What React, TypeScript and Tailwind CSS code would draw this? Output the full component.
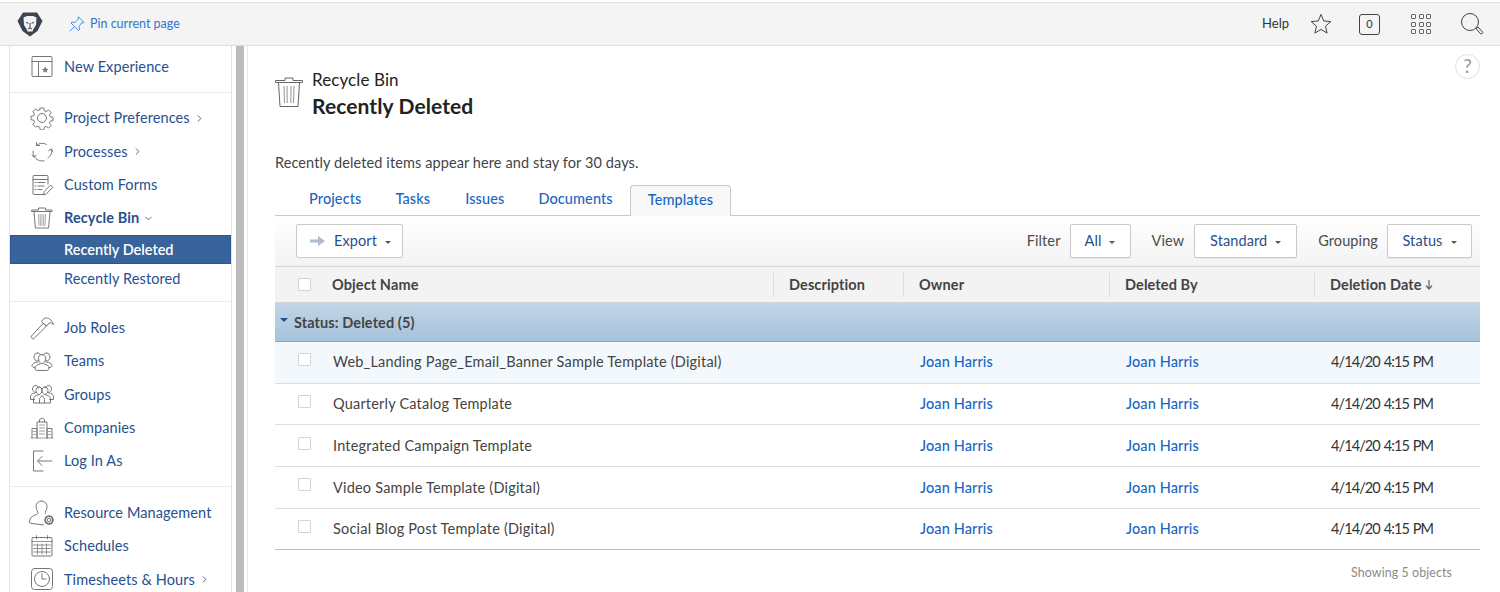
import type { ReactNode } from 'react'
import { ChevronDown, ChevronRight } from 'lucide-react'

const rows = [
  'Web_Landing Page_Email_Banner Sample Template (Digital)',
  'Quarterly Catalog Template',
  'Integrated Campaign Template',
  'Video Sample Template (Digital)',
  'Social Blog Post Template (Digital)',
]

function Icon({ children, size = 24 }: { children: ReactNode; size?: number }) {
  return (
    <svg width={size} height={size} viewBox="0 0 24 24" fill="none" stroke="#767676" strokeWidth="1" strokeLinecap="round" strokeLinejoin="round">
      {children}
    </svg>
  )
}

const icons: Record<string, ReactNode> = {
  experience: (
    <>
      <rect x="2" y="1.500" width="20" height="20" rx="1" />
      <path d="M2 6.500h20M8.500 6.500v15" />
      <path d="M15.200 11.500l1 2.200 2.300.2-1.800 1.500.6 2.300-2.100-1.200-2.100 1.200.6-2.300-1.800-1.500 2.300-.2z" fill="#767676" stroke="none" />
    </>
  ),
  gear: (
    <>
      <path d="M10.200 2h3.600l.5 2.800 1.900.8 2.400-1.600 2.500 2.500-1.600 2.400.8 1.900 2.700.5v3.400l-2.700.5-.8 1.900 1.600 2.400-2.500 2.500-2.400-1.600-1.900.8-.5 2.700h-3.600l-.5-2.700-1.900-.8L5.400 21 2.900 18.500l1.600-2.400-.8-1.900L1 13.700v-3.400l2.700-.5.8-1.900L2.900 5.500 5.400 3l2.400 1.600 1.900-.8z" />
      <circle cx="12" cy="12" r="4.500" />
    </>
  ),
  processes: (
    <>
      <path d="M6.500 6.500C9 4 13.500 3.500 16.500 5.500M6.500 3.500v3h3.200" />
      <path d="M21.500 10c.8 3.500-.5 7-3.500 9M22.800 12.800l-1.500-2.800-2.700 1.600" />
      <path d="M14 21.800c-4 .8-8-.8-10-4.800-1-2-1-3.500-.8-5M2 16l1.800 2 2.200-1.400" />
    </>
  ),
  forms: (
    <>
      <path d="M18 11V3.500a1 1 0 0 0-1-1H4a1 1 0 0 0-1 1v17a1 1 0 0 0 1 1h9" />
      <path d="M3 6.500h15M5 9.500h1M8 9.500h7M5 13h1M8 13h6M5 16.500h1M8 16.500h4" />
      <path d="M13.500 21.500l.7-3L20.500 12l2.300 2.300-6.300 6.500z" />
    </>
  ),
  trash: (
    <>
      <path d="M2 5.500h20V4H15.500V2h-7v2H2z" />
      <path d="M4 5.500l1.400 16.500h13.200L20 5.500" />
      <path d="M8.500 8.500l.4 11M12 8.500v11M15.500 8.500l-.4 11M10.200 8.500l.2 11M13.800 8.500l-.2 11" strokeWidth="0.6" />
    </>
  ),
  hammer: (
    <>
      <path d="M1 20.500L13.500 7l3 3L3.500 23z" />
      <path d="M11.500 5L15 2c3 -.5 7 1.500 8.500 6.500-1.500-1.500-3-2-4.500-1.500l-2.500 3z" />
    </>
  ),
  teams: (
    <>
      <path d="M7.500 13c-3 .5-5.500 1.500-5.500 3.500 0 1.500 1 2 3 2M7.500 4c-2 0-3.500 1.500-3.500 4 0 2 1.500 4 3.500 4 .7 0 1.300-.3 1.800-.7M7.500 4c1.500 0 2.500.7 3 1.800" />
      <path d="M16.500 13c3 .5 5.500 1.500 5.500 3.500 0 1.500-1 2-3 2M16.500 4c2 0 3.500 1.500 3.500 4 0 2-1.500 4-3.500 4-.7 0-1.300-.3-1.800-.7M16.500 4c-1.500 0-2.500.7-3 1.800" />
      <path d="M12 5.500c-2.200 0-3.800 1.800-3.800 4.300S10 14.500 12 14.500s3.800-2.200 3.800-4.700S14.200 5.500 12 5.500z" />
      <path d="M10 15c-3 .7-5 1.800-5 3.800 0 2 1.200 2.700 3 2.700h8c1.800 0 3-.7 3-2.700 0-2-2-3.100-5-3.800" />
    </>
  ),
  groups: (
    <>
      <path d="M5.500 3.500c-2 0-3 1.500-3 3.500s1.500 3.500 3 3.500M5 11c-2.500.5-4.500 1.500-4.500 3.500v3h4M5.500 3.500c1.500 0 2.500 1 2.700 2.500" />
      <path d="M18.500 3.500c2 0 3 1.500 3 3.500s-1.500 3.500-3 3.500M19 11c2.500.5 4.500 1.500 4.500 3.500v3h-4M18.500 3.500c-1.500 0-2.500 1-2.700 2.500" />
      <path d="M9 5c-2 0-3 1.500-3 3.500s1.500 4 3 4 3-2 3-4S11 5 9 5zM15 5c-2 0-3 1.500-3 3.500s1.500 4 3 4 3-2 3-4S17 5 15 5z" />
      <path d="M8 13c-2.500.5-4.500 1.800-4.500 3.800V21h17v-4.200c0-2-2-3.300-4.500-3.800M12 14c-1.500.8-2.500 2-2.500 3.500V21M12 14c1.500.8 2.500 2 2.500 3.500V21" />
    </>
  ),
  companies: (
    <>
      <path d="M2 22V12.500h5V22M17 22V12.500h5V22M7 22V6h10v16M9.500 6V3.500l3-1.500 2 1.500V6" />
      <path d="M1 22h22M9.500 9h5M9.500 12h5M9.500 15h5M9.500 18h5M3.500 15.500h2M3.500 18.500h2M18.500 15.500h2M18.500 18.500h2" strokeWidth="0.7" />
    </>
  ),
  login: (
    <>
      <path d="M13 2H3.500v20H13" />
      <path d="M22 12H8M12 7.500L7.500 12l4.500 4.500" />
    </>
  ),
  schedules: (
    <>
      <rect x="2" y="3.500" width="20" height="18.500" rx="1" />
      <path d="M2 7.500h20M6.500 1.500v3.500M17.500 1.500v3.500M3.500 11h17M3.500 14.500h17M3.500 18h17M7.500 10v10M12 10v10M16.500 10v10" strokeWidth="0.8" />
    </>
  ),
  timesheets: (
    <>
      <rect x="1.500" y="1.500" width="21" height="21" rx="3" />
      <circle cx="12" cy="12" r="7.500" />
      <path d="M12 7v5h4" />
    </>
  ),
}

function ResourceIcon() {
  return (
    <svg width="26" height="26" viewBox="0 0 26 26" fill="none" stroke="#767676" strokeWidth="1" strokeLinecap="round" strokeLinejoin="round">
      <path d="M12.500 1c-3.500 0-5.500 2.500-5.500 5.500 0 2.500 1 4.300 2 5.500.4 1.200-.3 2-1.500 2.500-3 1.200-6 2.300-6.500 5l-.5 2.500c0 .8.500 1.300 1.200 1.300l12.800 1.700" />
      <path d="M12.500 1c3.500 0 5.500 2.500 5.500 5.500 0 1.700-.4 3.200-1.200 4.500-.6 1-.5 1.700-.3 2.500" />
      <circle cx="20" cy="20" r="1.800" />
      <circle cx="20" cy="20" r="3.900" strokeDasharray="1.700 1.100" strokeWidth="1.800" />
    </svg>
  )
}

function NavItem({ icon, label, arrow, open, custom }: { icon?: string; label: string; arrow?: boolean; open?: boolean; custom?: ReactNode }) {
  return (
    <div className="flex h-[33.4px] items-center">
      <div className="flex w-[54px] shrink-0 justify-center pl-[10px]">{custom ?? <Icon>{icons[icon ?? '']}</Icon>}</div>
      <span className={`whitespace-nowrap ${open ? 'font-bold' : ''}`}>{label}</span>
      {arrow && <ChevronRight size={11} className="ml-[4px] mt-px text-[#3d5f92]" />}
      {open && <ChevronDown size={11} className="ml-[4px] mt-px text-[#3d5f92]" />}
    </div>
  )
}

function Divider() {
  return <div className="h-px bg-[#ebebeb]" />
}

function Sidebar() {
  return (
    <aside className="flex h-full w-[248px] shrink-0">
      <div className="ml-[9px] h-full w-[223px] border-x border-[#e4e4e4] text-[14.5px] tracking-[0.1px] text-[#26508f]">
        <div className="pt-[4px] pb-[9px]">
          <NavItem icon="experience" label="New Experience" />
        </div>
        <Divider />
        <div className="pt-[8px] pb-[1px]">
          <NavItem icon="gear" label="Project Preferences" arrow />
          <NavItem icon="processes" label="Processes" arrow />
          <NavItem icon="forms" label="Custom Forms" />
          <NavItem icon="trash" label="Recycle Bin" open />
          <div className="flex h-[29px] items-center border border-[#2a5597] bg-[#38639b] pl-[53px] font-semibold tracking-normal text-white">Recently Deleted</div>
          <div className="flex h-[30px] items-center pl-[54px]">Recently Restored</div>
        </div>
        <div className="mt-[6px]">
          <Divider />
        </div>
        <div className="pt-[9px] pb-[8px]">
          <NavItem icon="hammer" label="Job Roles" />
          <NavItem icon="teams" label="Teams" />
          <NavItem icon="groups" label="Groups" />
          <NavItem icon="companies" label="Companies" />
          <NavItem icon="login" label="Log In As" />
        </div>
        <Divider />
        <div className="pt-[9px]">
          <NavItem custom={<ResourceIcon />} label="Resource Management" />
          <NavItem icon="schedules" label="Schedules" />
          <NavItem icon="timesheets" label="Timesheets & Hours" arrow />
        </div>
      </div>
      <div className="ml-[4px] h-full w-[8px] bg-[#bcbcbc]" />
      <div className="ml-[3px] h-full w-[1px] bg-[#e8e8e8]" />
    </aside>
  )
}

function Logo() {
  return (
    <svg width="26" height="26" viewBox="0 0 26 26">
      <path d="M6 1.500h14L25.500 10 20.500 20 13 25.500 5.500 20 .5 10z" fill="#3b4452" />
      <path d="M6.500 6.500L10 5h6l3.500 1.500L19 14l-2.500 4-1 2.500h-5L9.500 18 7 14z" fill="#f2f2f2" />
      <path d="M9 11.500l2.500.7M17 11.500l-2.500.7M13 12v5M11 18l2-1 2 1" stroke="#3b4452" strokeWidth="1" fill="none" />
    </svg>
  )
}

function TopBar() {
  return (
    <header className="mt-[2px] flex h-[44px] shrink-0 items-center border-y border-[#dedede] bg-[#f4f4f4]">
      <div className="ml-[17px]">
        <Logo />
      </div>
      <svg className="ml-[26px]" width="16" height="16" viewBox="0 0 16 16" fill="none" stroke="#4a90e2" strokeWidth="1" strokeLinejoin="round" strokeLinecap="round">
        <path d="M9.500 1L15 6.500l-2.500.5L10 10.500l.5 3-1 1L2 7l1-1 3 .5L9 3.500z" />
        <path d="M5.500 10.500L1 15" />
      </svg>
      <span className="ml-[5px] text-[12.5px] text-[#2f75cf]">Pin current page</span>
      <div className="ml-auto flex items-center">
        <span className="text-[13px] text-[#333]">Help</span>
        <svg className="ml-[20px]" width="24" height="24" viewBox="0 0 24 24" fill="none" stroke="#444" strokeWidth="1" strokeLinejoin="round">
          <path d="M12 2.500l2.800 6.500 7 .6-5.300 4.600 1.600 6.900-6.100-3.700-6.100 3.700 1.600-6.900-5.300-4.600 7-.6z" />
        </svg>
        <div className="ml-[26px] flex h-[21px] w-[21px] items-center justify-center rounded-[3px] border border-[#444] text-[11px] text-[#333]">0</div>
        <div className="ml-[31px] grid grid-cols-3 gap-[2.5px]">
          {Array.from({ length: 9 }).map((_, i) => (
            <div key={i} className="h-[5px] w-[5px] rounded-[1px] border border-[#666]" />
          ))}
        </div>
        <svg className="ml-[29px] mr-[16px]" width="24" height="24" viewBox="0 0 24 24" fill="none" stroke="#444" strokeWidth="1">
          <circle cx="10" cy="10" r="8.500" />
          <path d="M16 16.500l2-1.500 5 5.500-2 1.800z" />
        </svg>
      </div>
    </header>
  )
}

function Caret({ className = '' }: { className?: string }) {
  return <span className={`inline-block h-0 w-0 border-x-[3.5px] border-t-[3.5px] border-x-transparent border-t-[#555] ${className}`} />
}

function Dropdown({ label, width }: { label: string; width: string }) {
  return (
    <div className={`flex h-[34px] items-center justify-center gap-[8px] rounded-[2px] border border-[#c9c9c9] bg-white text-[#26508f] shadow-[0_1px_1px_rgba(0,0,0,0.05)] ${width}`}>
      <span className="-mt-px">{label}</span>
      <Caret className="mt-[2px]" />
    </div>
  )
}

function Toolbar() {
  return (
    <div className="flex h-[50px] items-center bg-gradient-to-b from-white to-[#f3f3f3] pl-[21px] pr-[8px]">
      <div className="flex h-[34px] w-[107px] items-center rounded-[2px] border border-[#c9c9c9] bg-white pl-[13px] text-[#26508f]">
        <svg width="16" height="12" viewBox="0 0 16 12">
          <path d="M0 4.500h8V1l7 5-7 5V7.500H0z" fill="#aebccb" />
        </svg>
        <span className="ml-[8px] -mt-px">Export</span>
        <Caret className="ml-[8px] mt-[2px]" />
      </div>
      <div className="ml-auto flex items-center text-[#4b4b4b]">
        <span className="-mt-px">Filter</span>
        <div className="ml-[9px]">
          <Dropdown label="All" width="w-[61px]" />
        </div>
        <span className="ml-[21px] -mt-px">View</span>
        <div className="ml-[10px]">
          <Dropdown label="Standard" width="w-[103px]" />
        </div>
        <span className="ml-[21px] -mt-px">Grouping</span>
        <div className="ml-[9px]">
          <Dropdown label="Status" width="w-[85px]" />
        </div>
      </div>
    </div>
  )
}

function Checkbox() {
  return <div className="h-[13px] w-[13px] rounded-[1px] border border-[#d4d4d4] bg-white" />
}

function Header({ label, arrow }: { label: string; arrow?: boolean }) {
  return (
    <div className="flex h-[24px] items-center border-l border-[#dcdcdc] pl-[15px]">
      {label}
      {arrow && (
        <svg className="ml-[3px]" width="8" height="10" viewBox="0 0 8 10" fill="none" stroke="#666" strokeWidth="1.200">
          <path d="M4 0v8.500M1 5.500l3 3.500 3-3.500" />
        </svg>
      )}
    </div>
  )
}

function Table() {
  return (
    <div>
      <div className="grid h-[37px] grid-cols-[498px_130px_206px_205px_166px] items-center border-y border-[#d6d6d6] bg-[#f3f3f3] font-bold text-[#444]">
        <div className="flex items-center pl-[23px]">
          <Checkbox />
          <span className="ml-[21px]">Object Name</span>
        </div>
        <Header label="Description" />
        <Header label="Owner" />
        <Header label="Deleted By" />
        <Header label="Deletion Date" arrow />
      </div>
      <div className="flex h-[39px] items-center border-b border-[#8ea7bf] bg-gradient-to-b from-[#c1d6e7] to-[#a6c2dc] font-bold text-[#444]">
        <span className="-mt-[4px] ml-[5px] inline-block h-0 w-0 border-x-[4px] border-t-[4px] border-x-transparent border-t-[#1e4f85]" />
        <span className="ml-[6px] mt-px">Status: Deleted (5)</span>
      </div>
      {rows.map((name, i) => (
        <div
          key={name}
          className={`grid h-[41.7px] grid-cols-[498px_130px_206px_205px_166px] items-center border-b ${i === 4 ? 'border-[#bdbdbd]' : 'border-[#dedede]'} ${i === 0 ? 'bg-[#f3f8fc]' : 'bg-white'}`}
        >
          <div className="flex items-center pl-[23px]">
            <div className="-mt-[5px]">
              <Checkbox />
            </div>
            <span className="ml-[22px] tracking-[0.2px] text-[#444]">{name}</span>
          </div>
          <div />
          <div className="pl-[17px] font-medium text-[#1c66c4]">Joan Harris</div>
          <div className="pl-[17px] font-medium text-[#1c66c4]">Joan Harris</div>
          <div className="pl-[17px] tracking-[-0.9px] text-[#333] [word-spacing:1px]">4/14/20 4:15 PM</div>
        </div>
      ))}
    </div>
  )
}

function Main() {
  return (
    <main className="relative h-full min-w-0 flex-1 pr-[20px] pl-[27px] text-[14.5px] tracking-[0.1px]">
      <div className="absolute top-[8px] right-[20px] flex h-[25px] w-[25px] items-center justify-center rounded-full border border-[#dedede] text-[19px] text-[#999]">?</div>
      <div className="flex pt-[23px]">
        <svg className="mt-[7px]" width="28" height="32" viewBox="0 0 28 32" fill="none" stroke="#666" strokeWidth="1">
          <path d="M0.500 6.500h27V4.500h-9.500V2h-8v2.500H0.500z" />
          <path d="M3.500 6.500l1.500 24h18l1.500-24" />
          <path d="M9 10l.5 17M12 10l.2 17M16 10l-.2 17M19 10l-.5 17" strokeWidth="0.7" />
        </svg>
        <div className="ml-[9px]">
          <div className="text-[17px] leading-[22px] text-[#222]">Recycle Bin</div>
          <div className="mt-[1px] text-[21px] leading-[28px] font-bold text-[#222]">Recently Deleted</div>
        </div>
      </div>
      <p className="mt-[33px] leading-[20px] text-[#444]">Recently deleted items appear here and stay for 30 days.</p>
      <div className="mt-[12px] flex h-[31px] items-end border-b border-[#c9c9c9] pl-[17px] font-medium text-[#1c66c4]">
        <div className="flex h-[30px] items-center px-[17px] pb-[2px]">Projects</div>
        <div className="flex h-[30px] items-center px-[17px] pb-[2px]">Tasks</div>
        <div className="flex h-[30px] items-center px-[18px] pb-[2px]">Issues</div>
        <div className="flex h-[30px] items-center pl-[16px] pr-[17px] pb-[2px]">Documents</div>
        <div className="-mb-px flex h-[31px] items-center rounded-t-[4px] border border-b-0 border-[#c9c9c9] bg-[#f8f8f8] px-[17px] pb-[3px]">Templates</div>
      </div>
      <Toolbar />
      <Table />
      <div className="mt-[14px] pr-[28px] text-right text-[12.4px] text-[#8a8a8a]">Showing 5 objects</div>
    </main>
  )
}

export default function App() {
  return (
    <div className="flex h-[592px] w-[1500px] flex-col overflow-hidden bg-white font-['Lato','Inter',sans-serif]">
      <TopBar />
      <div className="flex min-h-0 flex-1">
        <Sidebar />
        <Main />
      </div>
    </div>
  )
}
